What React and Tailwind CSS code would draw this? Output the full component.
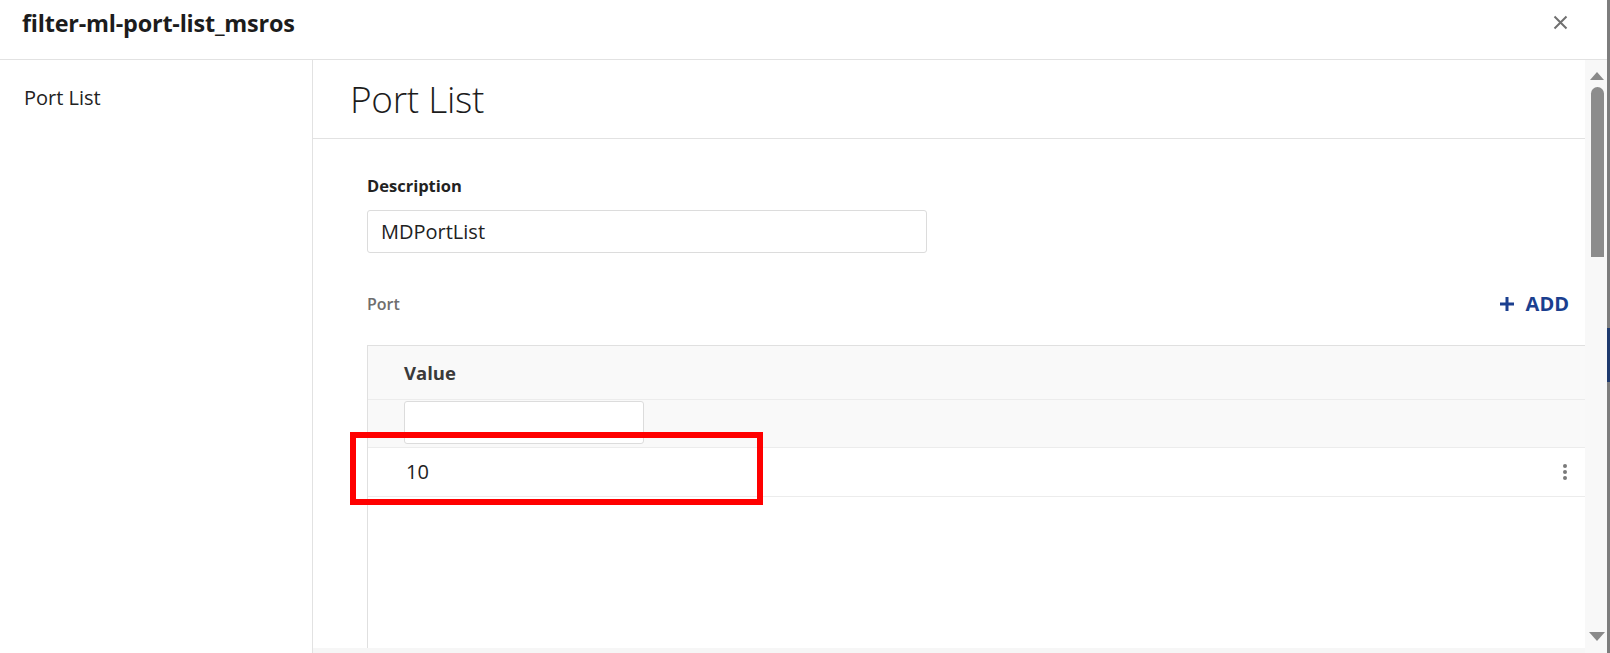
import React from 'react';

const font = { fontFamily: '"Open Sans", "Noto Sans", sans-serif' };

function Scrollbar() {
  return (
    <div className="w-[22px] shrink-0 bg-[#f8f8f8] flex flex-col items-center pt-[12px] pb-[12px]">
      <svg width="14" height="8" viewBox="0 0 14 8" className="ml-[2px]">
        <polygon points="7,0 14,8 0,8" fill="#8a8a8a" />
      </svg>
      <div className="mt-[7px] ml-[2px] w-[13px] h-[170px] rounded-t-full rounded-b-[2px] bg-[#8c8c8c]" />
      <div className="flex-1" />
      <svg width="16" height="9" viewBox="0 0 16 9" className="ml-[2px]">
        <polygon points="0,0 16,0 8,9" fill="#8a8a8a" />
      </svg>
    </div>
  );
}

export default function App() {
  return (
    <div className="relative w-[1610px] h-[653px] flex overflow-hidden bg-white text-[#222]" style={font}>
      <div className="flex-1 flex flex-col min-w-0">
        {/* Header */}
        <div className="h-[60px] shrink-0 border-b border-[#e2e2e2] flex items-center justify-between pl-[22px] pr-[39px]">
          <h1 className="text-[23.4px] font-bold tracking-[-0.2px] text-[#1c1c1c] -mt-[11px]">filter-ml-port-list_msros</h1>
          <svg width="15" height="15" viewBox="0 0 15 15" className="-mt-[14px]">
            <path d="M1.5 1.5 L13.5 13.5 M13.5 1.5 L1.5 13.5" stroke="#707070" strokeWidth="2" />
          </svg>
        </div>

        {/* Body */}
        <div className="flex-1 flex min-h-0">
          <div className="w-[313px] shrink-0 border-r border-[#e2e2e2] pl-[24px] pt-[23px]">
            <div className="text-[20px] text-[#222]">Port List</div>
          </div>

          <div className="flex-1 flex min-w-0">
            <div className="flex-1 flex flex-col min-w-0 overflow-hidden">
              <div className="flex-1 min-h-0 overflow-hidden">
                <div className="h-[79px] border-b border-[#e2e2e2] pl-[37px] flex items-center">
                  <h2 className="text-[37px] font-light text-[#1c1c1c] -mt-[1px] tracking-[-0.3px]">Port List</h2>
                </div>

                <div className="pl-[54px]">
                  <div className="pt-[35px] text-[16.5px] leading-[24px] font-bold text-[#222]">Description</div>
                  <div className="mt-[12px] w-[560px] h-[43px] border border-[#dcdcdc] rounded-[3px] flex items-center pl-[13px] pt-[1px] text-[20px] text-[#222]">
                    MDPortList
                  </div>

                  <div className="mt-[36px] flex items-center justify-between pr-[16px]">
                    <div className="text-[16px] font-semibold text-[#6e6e6e]">Port</div>
                    <div className="flex items-center gap-[11px] text-[#1b3f8f] font-bold text-[20px]">
                      <svg width="16" height="16" viewBox="0 0 16 16">
                        <path d="M8 1 V15 M1 8 H15" stroke="#1b3f8f" strokeWidth="3" />
                      </svg>
                      <span>ADD</span>
                    </div>
                  </div>

                  <div className="mt-[26px] -mr-[20px] border border-[#e0e0e0] h-[320px]">
                    <div className="h-[54px] bg-[#f9f9f9] border-b border-[#ececec] flex items-center pl-[36px]">
                      <span className="text-[18.5px] font-bold text-[#3a3a3a]">Value</span>
                    </div>
                    <div className="h-[48px] bg-[#f9f9f9] border-b border-[#ececec] pl-[36px] pt-[1px]">
                      <div className="w-[240px] h-[43px] bg-white border border-[#dcdcdc] rounded-[3px]" />
                    </div>
                    <div className="h-[49px] border-b border-[#ececec] flex items-center justify-between pl-[38px] pr-[37px]">
                      <span className="text-[20px] text-[#222]">10</span>
                      <div className="flex flex-col gap-[2px]">
                        <span className="w-[4px] h-[4px] rounded-full bg-[#7a7a7a]" />
                        <span className="w-[4px] h-[4px] rounded-full bg-[#7a7a7a]" />
                        <span className="w-[4px] h-[4px] rounded-full bg-[#7a7a7a]" />
                      </div>
                    </div>
                  </div>
                </div>
              </div>
              <div className="h-[5px] shrink-0 bg-[#f6f6f6]" />
            </div>
            <Scrollbar />
          </div>
        </div>
      </div>

      {/* page behind the dialog */}
      <div className="w-[3px] shrink-0 bg-[#7d7d7d] flex flex-col">
        <div className="h-[328px]" />
        <div className="h-[54px] bg-[#1f3a6e]" />
      </div>

      {/* annotation */}
      <div className="absolute left-[350px] top-[432px] w-[413px] h-[73px] border-[6px] border-[#ff0000]" />
    </div>
  );
}
